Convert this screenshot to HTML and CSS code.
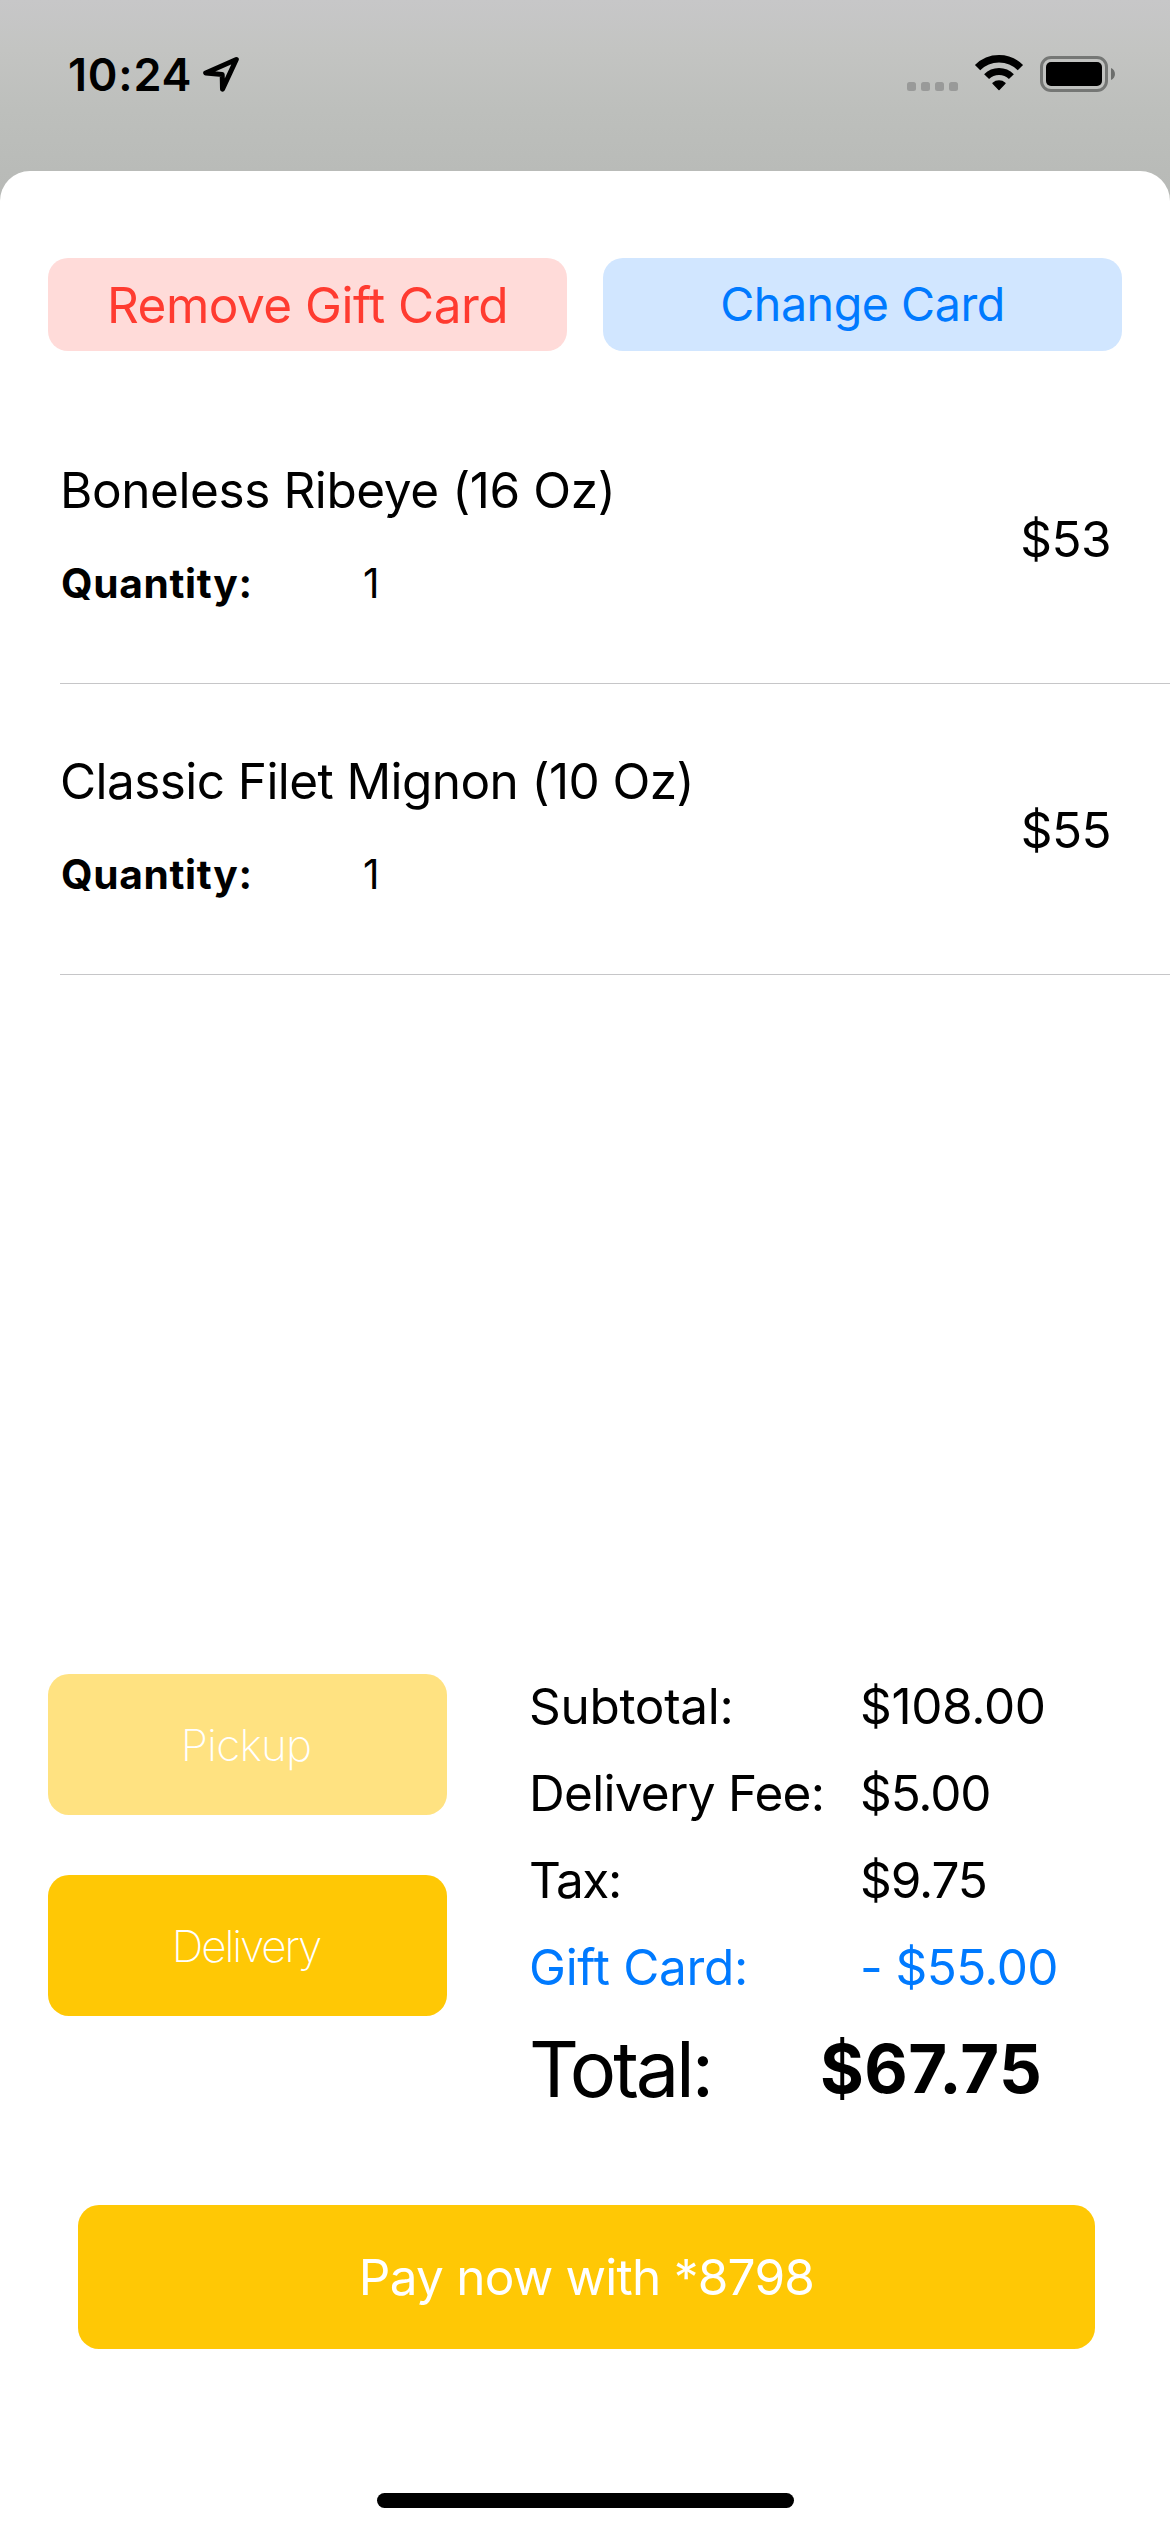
FILE: index.html
```html
<!DOCTYPE html>
<html lang="en">
<head>
<meta charset="utf-8">
<title>Checkout</title>
<link rel="stylesheet" href="styles.css">
</head>
<body>
<header class="status">
  <span class="time">10:24</span>
  <svg class="arrow" width="36" height="36" viewBox="0 0 36 36"><path d="M33.3 3.5 2.7 17 19.2 18.5 19.5 33.2Z" fill="none" stroke="#000" stroke-width="5" stroke-linejoin="round"/></svg>
  <div class="indicators">
    <svg width="51" height="36" viewBox="0 0 51 36" fill="#999a99"><rect x="0" y="26" width="9" height="9" rx="2.5"/><rect x="14" y="26" width="9" height="9" rx="2.5"/><rect x="28" y="26" width="9" height="9" rx="2.5"/><rect x="42" y="26" width="9" height="9" rx="2.5"/></svg>
    <svg class="wifi" width="48" height="36" viewBox="0 1 48 36">
      <path d="M2.6 12.6A30.25 30.25 0 0 1 45.4 12.6" fill="none" stroke="#000" stroke-width="7.5"/>
      <path d="M11.6 21.6A17.5 17.5 0 0 1 36.4 21.6" fill="none" stroke="#000" stroke-width="7"/>
      <path d="M18 28.2A9.4 9.4 0 0 1 30 28.2L24 34.6Z" stroke="#000" stroke-width="1.4" stroke-linejoin="round"/>
    </svg>
    <svg width="75" height="36" viewBox="0 0 75 36">
      <rect x="1.5" y="1.5" width="65" height="33" rx="9.5" fill="none" stroke="#757775" stroke-width="3"/>
      <rect x="6" y="6" width="56" height="24" rx="5"/>
      <path d="M71 12C76.3 14 76.3 22 71 24Z" fill="#6c6e6c"/>
    </svg>
  </div>
</header>
<main class="sheet">
  <div class="actions">
    <button class="action remove">Remove Gift Card</button>
    <button class="action change">Change Card</button>
  </div>
  <ul class="items">
    <li class="item">
      <div class="info">
        <div class="name">Boneless Ribeye (16 Oz)</div>
        <div class="qty"><b class="qty-label">Quantity:</b><span>1</span></div>
      </div>
      <div class="price">$53</div>
    </li>
    <li class="item">
      <div class="info">
        <div class="name filet">Classic Filet Mignon (10 Oz)</div>
        <div class="qty"><b class="qty-label">Quantity:</b><span>1</span></div>
      </div>
      <div class="price">$55</div>
    </li>
  </ul>
  <section class="summary">
    <div class="modes">
      <button class="mode pickup">Pickup</button>
      <button class="mode delivery">Delivery</button>
    </div>
    <div class="totals">
      <div class="line"><span class="label">Subtotal:</span><span class="wide">$108.00</span></div>
      <div class="line"><span class="label fee">Delivery Fee:</span><span class="amount">$5.00</span></div>
      <div class="line"><span class="label tax">Tax:</span><span class="amount">$9.75</span></div>
      <div class="line gift"><span class="label">Gift Card:</span><span class="credit">- $55.00</span></div>
      <div class="grand"><span class="grand-label">Total:</span><b class="grand-amount">$67.75</b></div>
    </div>
  </section>
  <button class="pay">Pay now with *8798</button>
  <div class="home-bar"></div>
</main>
</body>
</html>
```
FILE: styles.css
```css
* { box-sizing: border-box; }

body {
  margin: 0;
  width: 1170px;
  height: 2532px;
  display: flex;
  flex-direction: column;
  background: linear-gradient(#c7c7c8 0, #c3c4c2 50px, #bdbfbc 110px, #b9bbb8 171px, #b7b9b6 210px);
  color: #000;
  font-family: Inter, "Liberation Sans", sans-serif;
  font-size: 49.5px;
  overflow: hidden;
}

button {
  border: 0;
  padding: 0;
  font: inherit;
}

svg { display: block; overflow: visible; }

.status {
  height: 171px;
  padding: 0 55px 23px 67px;
  display: flex;
  align-items: center;
}

.time {
  width: 136px;
  padding-left: 1px;
  font-size: 45px;
  font-weight: 600;
  letter-spacing: 0.8px;
}

.indicators {
  margin-left: auto;
  display: flex;
  gap: 17px;
}

.sheet {
  flex: 1;
  display: flex;
  flex-direction: column;
  padding-top: 87px;
  background: #fff;
  border-radius: 30px 30px 0 0;
}

.actions {
  display: flex;
  gap: 36px;
  padding: 0 48px;
}

.action {
  flex: 1;
  height: 93px;
  border-radius: 20px;
}

.remove { color: #ff3b30; background: #ffdbd9; letter-spacing: -0.52px; }
.change { color: #007aff; background: #d1e6ff; font-size: 46.6px; letter-spacing: -0.46px; padding-bottom: 2px; }

.items {
  flex: 1;
  margin: 42px 0 0;
  padding: 0 0 0 60px;
  list-style: none;
}

.item {
  height: 291px;
  display: flex;
  justify-content: space-between;
  padding-right: 59px;
  border-bottom: 1px solid #c6c6c8;
}

.info { padding-top: 67px; }
.name { line-height: 61px; letter-spacing: -0.42px; }
.filet { letter-spacing: -0.58px; }

.qty {
  display: flex;
  margin-top: 38px;
  font-size: 40.7px;
  line-height: 50px;
}

.qty-label { width: 303px; letter-spacing: 0.66px; padding-left: 1px; }
.price { align-self: center; letter-spacing: -0.58px; padding-top: 1px; }

.summary {
  height: 543px;
  display: flex;
  gap: 82px;
  padding-left: 48px;
}

.modes {
  display: flex;
  flex-direction: column;
  gap: 60px;
  width: 399px;
  padding-top: 12px;
}

.mode {
  height: 141px;
  border-radius: 21px;
  color: #fff;
  background: #ffc805;
  font-size: 44px;
  font-weight: 250;
  padding-right: 3px;
}

.pickup { background: #ffe281; letter-spacing: -0.8px; }
.delivery { letter-spacing: -2.1px; }

.totals { padding-top: 1px; }
.line { display: flex; line-height: 87px; }
.label { width: 331px; letter-spacing: -0.3px; }
.fee { letter-spacing: -0.72px; }
.tax { letter-spacing: -1.38px; }
.wide { letter-spacing: -0.34px; }
.amount { letter-spacing: -1.12px; }
.credit { letter-spacing: -0.6px; }
.gift { color: #007aff; }

.grand { display: flex; margin-top: 10px; line-height: 96px; }
.grand-label { width: 291px; font-size: 77.5px; letter-spacing: -3.15px; }
.grand-amount { font-size: 67px; letter-spacing: 0.41px; }

.pay {
  width: 1017px;
  height: 144px;
  margin-left: 78px;
  border-radius: 21px;
  color: #fff;
  background: #ffc805;
  letter-spacing: -0.76px;
}

.home-bar {
  width: 417px;
  height: 15px;
  margin: 144px 0 24px 377px;
  border-radius: 8px;
  background: #000;
}
```
